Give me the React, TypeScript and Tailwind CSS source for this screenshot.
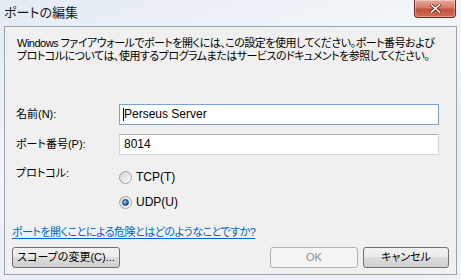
import React from "react";

function Radio({ checked }: { checked?: boolean }) {
  return (
    <span className="flex h-[13px] w-[13px] items-center justify-center rounded-full border border-[#a2a2a2] bg-gradient-to-br from-[#d6d6d6] to-[#fbfbfb]">
      {checked && (
        <span className="h-[7px] w-[7px] rounded-full border border-[#1b3f6e] bg-[radial-gradient(circle_at_35%_35%,#9fd2f5,#2a77b5_55%,#123e70)]" />
      )}
    </span>
  );
}

function Button({ label, disabled, className }: { label: string; disabled?: boolean; className: string }) {
  return (
    <div
      className={
        "flex h-[21px] items-center justify-center rounded-[3px] border text-[11px] " +
        (disabled
          ? "border-[#adb2b5] bg-[#f4f4f4] text-[#8d8d8d] "
          : "border-[#707070] bg-[linear-gradient(#f2f2f2,#ebebeb_50%,#dddddd_50%,#cfcfcf)] text-black ") +
        className
      }
    >
      {label}
    </div>
  );
}

export default function App() {
  return (
    <div className="flex h-[280px] w-[461px] flex-col bg-[linear-gradient(160deg,#e4ebf3,#f3f6fa_40%,#e6edf5_70%,#eef3f8)] font-['Liberation_Sans','Noto_Sans_CJK_JP',sans-serif] text-[11px] leading-[13px] text-black [font-feature-settings:'palt']">
      {/* title bar */}
      <div className="flex h-[26px] shrink-0 items-start justify-between pl-[4px] pr-[5px]">
        <span className="mt-[5px] text-[13px] leading-[15px] text-[#1a1a1a]">ポートの編集</span>
        <div className="flex h-[18px] w-[42px] items-center justify-center rounded-b-[4px] border border-t-0 border-[#6b2a22] bg-[linear-gradient(#e9a99a,#d77a67_45%,#c5503a_55%,#d26d56)] shadow-[inset_0_0_0_1px_rgba(255,255,255,0.35)]">
          <svg width="11" height="9" viewBox="0 0 11 9">
            <path d="M1.5 1 L9.5 8 M9.5 1 L1.5 8" stroke="#5a2018" strokeWidth="3" strokeLinecap="square" />
            <path d="M1.5 1 L9.5 8 M9.5 1 L1.5 8" stroke="#ffffff" strokeWidth="1.6" strokeLinecap="square" />
          </svg>
        </div>
      </div>

      {/* content panel */}
      <div className="mx-[4px] mb-[5px] flex flex-1 flex-col border border-[#9aa2aa] bg-[#f0f0f0] px-[7px] pt-[10px]">
        <p className="ml-[5px] whitespace-nowrap tracking-[-0.5px]">
          Windows ファイアウォールでポートを開くには、この設定を使用してください。ポート番号および
          <br />
          プロトコルについては、使用するプログラムまたはサービスのドキュメントを参照してください。
        </p>

        <div className="ml-[4px] mr-[10px] mt-[41px] flex items-center">
          <span className="w-[103px]">名前(N):</span>
          <div className="flex h-[21px] flex-1 items-center border border-[#7da2ce] bg-white pl-[3px] text-[12px]">
            <span className="h-[13px] w-px bg-black" />
            <span>Perseus Server</span>
          </div>
        </div>
        <div className="ml-[4px] mr-[10px] mt-[9px] flex items-center">
          <span className="w-[103px]">ポート番号(P):</span>
          <div className="flex h-[21px] flex-1 items-center border border-[#d5d5d5] border-t-[#abadb3] bg-white pl-[4px] text-[12px]">
            8014
          </div>
        </div>

        <div className="ml-[4px] mt-[15px] flex">
          <span className="-mt-[3px] w-[103px]">プロトコル:</span>
          <div className="flex flex-col gap-[11px] text-[12px]">
            <label className="flex h-[14px] items-center gap-[4px]">
              <Radio />
              <span>TCP(T)</span>
            </label>
            <label className="flex h-[14px] items-center gap-[4px]">
              <Radio checked />
              <span>UDP(U)</span>
            </label>
          </div>
        </div>

        <a className="mt-[17px] self-start tracking-[-0.5px] text-[#0066cc] underline underline-offset-[2px]">
          ポートを開くことによる危険とはどのようなことですか?
        </a>

        <div className="mt-[8px] flex items-center">
          <Button label="スコープの変更(C)..." className="w-[108px]" />
          <div className="flex-1" />
          <Button label="OK" disabled className="w-[88px]" />
          <Button label="キャンセル" className="ml-[5px] w-[86px]" />
        </div>
      </div>
    </div>
  );
}
